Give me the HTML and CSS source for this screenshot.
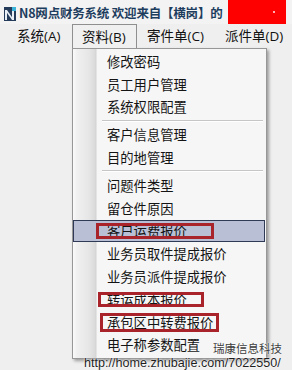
FILE: index.html
```html
<!DOCTYPE html>
<html lang="zh-CN">
<head>
<meta charset="utf-8">
<title>N8网点财务系统</title>
<link rel="stylesheet" href="styles.css">
</head>
<body>
<div class="window">
  <div class="titlebar">
    <svg class="app-icon" width="12" height="14" viewBox="0 0 12 14">
      <rect x="0" y="0" width="12" height="14" fill="#243c5a"/>
      <rect x="1" y="3" width="2" height="10" fill="#e8eef4"/>
      <rect x="8" y="3" width="2" height="10" fill="#e8eef4"/>
      <polygon points="1,3 3,3 10,13 8,13" fill="#e8eef4"/>
      <rect x="8" y="0" width="4" height="4" fill="#3bb3d9"/>
    </svg>
    <span class="title-text">N8网点财务系统 欢迎来自【横岗】的</span>
    <div class="redact"><span class="dot"></span></div>
  </div>
  <div class="menubar">
    <span class="mitem m1">系统(A)</span>
    <span class="mitem m2 open">资料(B)</span>
    <span class="mitem m3">寄件单(C)</span>
    <span class="mitem m4">派件单(D)</span>
  </div>
  <div class="dropdown">
    <div class="row">修改密码</div>
    <div class="row">员工用户管理</div>
    <div class="row">系统权限配置</div>
    <div class="sep"></div>
    <div class="row">客户信息管理</div>
    <div class="row">目的地管理</div>
    <div class="sep"></div>
    <div class="row">问题件类型</div>
    <div class="row">留仓件原因</div>
    <div class="row hover">客户运费报价<span class="mark mark-a"></span></div>
    <div class="row">业务员取件提成报价</div>
    <div class="row">业务员派件提成报价</div>
    <div class="row">转运成本报价<span class="mark mark-b"></span></div>
    <div class="row">承包区中转费报价<span class="mark mark-c"></span></div>
    <div class="row">电子称参数配置</div>
  </div>
  <div class="wm-name">瑞康信息科技</div>
  <div class="wm-url">http://home.zhubajie.com/7022550/</div>
</div>
</body>
</html>
```
FILE: styles.css
```css
html, body {
  margin: 0;
  padding: 0;
}
body {
  background: #efefef;
  font-family: "Open Sans", "Noto Sans CJK SC", sans-serif;
  color: #111;
}
.window {
  position: relative;
  width: 292px;
  height: 370px;
  overflow: hidden;
  background: #efefef;
}
.titlebar {
  height: 24px;
  display: flex;
  align-items: center;
  padding-left: 4px;
  background: #f3f3f3;
}
.app-icon {
  flex: none;
  margin-top: 3px;
}
.title-text {
  margin-left: 3px;
  font-family: "Noto Sans CJK SC", sans-serif;
  font-weight: bold;
  font-size: 12.5px;
  color: #1d3d5e;
  white-space: nowrap;
  letter-spacing: -0.2px;
}
.redact {
  margin-left: auto;
  margin-right: 6px;
  width: 58px;
  height: 24px;
  align-self: flex-start;
  background: #fe0000;
  display: flex;
  align-items: center;
  justify-content: flex-end;
  padding-right: 11px;
  box-sizing: border-box;
}
.dot {
  width: 2px;
  height: 2px;
  background: #ffb0b0;
}
.menubar {
  height: 24px;
  display: flex;
  align-items: stretch;
  font-size: 13.5px;
  line-height: 24px;
  white-space: nowrap;
}
.mitem {
  display: block;
  box-sizing: border-box;
}
.m1 { margin-left: 17px; width: 55px; }
.m2 {
  width: 65px;
  padding-left: 9px;
  border: 1px solid #8f8f8f;
  border-bottom: none;
  line-height: 22px;
  padding-top: 1px;
  background: #f0f0f0;
}
.m3 { margin-left: 10px; width: 78px; }
.dropdown {
  margin-left: 72px;
  width: 195px;
  box-sizing: border-box;
  border: 1px solid #979797;
  padding: 1px 1px 2px 0;
  background:
    linear-gradient(to right,
      #fafafa 0, #f0f0f0 4px, #e6e6e6 16px, #dadada 22px, #d2d2d2 23px,
      #f6f6f6 24px, #f6f6f6 100%);
  box-shadow: 2px 2px 3px rgba(0, 0, 0, 0.35);
  font-size: 13.3px;
}
.row {
  position: relative;
  height: 22.8px;
  display: flex;
  align-items: center;
  padding-left: 34px;
  box-sizing: border-box;
  white-space: nowrap;
  color: #141414;
}
.row.hover {
  background: #b9c0d6;
  border: 1px solid #2e3a56;
  padding-left: 33px;
}
.sep {
  height: 5px;
  display: flex;
  align-items: center;
  padding-left: 29px;
  padding-right: 2px;
}
.sep::after {
  content: "";
  flex: 1;
  height: 1px;
  background: #c6c6c6;
  border-bottom: 1px solid #ffffff;
}
.mark {
  position: absolute;
  box-sizing: border-box;
  border: 3px solid #a9232b;
  pointer-events: none;
}
.mark-a { left: 22px; top: 2.4px; width: 118px; height: 16px; }
.mark-b { left: 25px; top: 4px; width: 106px; height: 15px; }
.mark-c { left: 27px; top: 2px; width: 119px; height: 19px; }
.wm-name {
  position: absolute;
  left: 213px;
  top: 341px;
  height: 14px;
  line-height: 14px;
  font-family: "Noto Sans CJK SC", sans-serif;
  font-size: 11.5px;
  color: #3c3c3c;
  text-shadow: 0 0 2px #fff, 0 0 1px #fff;
  white-space: nowrap;
}
.wm-url {
  position: absolute;
  left: 84px;
  top: 356px;
  height: 14px;
  line-height: 14px;
  font-family: "Liberation Sans", sans-serif;
  font-size: 12.6px;
  color: #1e1e1e;
  text-shadow: 0 0 2px #fff, 0 0 1px #fff;
  white-space: nowrap;
}
```
